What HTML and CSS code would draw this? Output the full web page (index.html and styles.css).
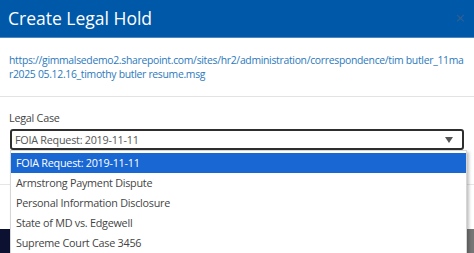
FILE: index.html
```html
<!DOCTYPE html>
<html lang="en">
<head>
    <meta charset="UTF-8">
    <meta name="viewport" content="width=device-width, initial-scale=1.0">
    <title>Create Legal Hold</title>
    <link rel="stylesheet" href="styles.css">
</head>
<body>

    <div class="modal">
        <!-- Header -->
        <div class="modal-header">
            <h2 class="modal-title">Create Legal Hold</h2>
            <span class="close">&times;</span>
        </div>

        <!-- Document location -->
        <div class="modal-section doc">
            <a class="doc-link" href="#">https://gimmalsedemo2.sharepoint.com/sites/hr2/administration/correspondence/tim butler_11mar2025 05.12.16_timothy butler resume.msg</a>
        </div>

        <!-- Legal case picker -->
        <div class="modal-section form">
            <label class="field-label" for="legalCase">Legal Case</label>
            <div class="select" id="legalCase">
                <span class="select-value">FOIA Request: 2019-11-11</span>
                <svg class="select-arrow" width="8" height="6" viewBox="0 0 8 6"><path d="M0 0 H8 L4 6 Z" fill="#555"/></svg>
            </div>
        </div>

        <div class="modal-footer"></div>
    </div>

    <!-- Page behind the dialog -->
    <div class="page-behind">
        <div class="page-nav"></div>
        <div class="page-content"></div>
    </div>

    <!-- Open dropdown list -->
    <ul class="dropdown">
        <li class="option selected">FOIA Request: 2019-11-11</li>
        <li class="option">Armstrong Payment Dispute</li>
        <li class="option">Personal Information Disclosure</li>
        <li class="option">State of MD vs. Edgewell</li>
        <li class="option">Supreme Court Case 3456</li>
    </ul>

</body>
</html>
```

FILE: styles.css
```css
body {
    font-family: 'Open Sans', 'Noto Sans', sans-serif;
    margin: 0;
    padding: 0;
    background-color: #ffffff;
    position: relative;
    height: 253px;
    overflow: hidden;
}

.modal {
    background: white;
    height: 229px;
    display: flex;
    flex-direction: column;
}

.modal-header {
    background-color: #0058a8;
    height: 37px;
    border-bottom: 1px solid #4d86c0;
    display: flex;
    align-items: center;
    justify-content: space-between;
    padding: 0 9px 0 8px;
}

.modal-title {
    margin: 0;
    color: #ffffff;
    font-size: 17.5px;
    font-weight: 400;
    line-height: 22px;
    padding-bottom: 2px;
}

.close {
    color: #2f5f93;
    font-size: 17px;
    line-height: 17px;
    padding-bottom: 2px;
}

.modal-section {
    padding: 0 9px;
}

.doc {
    padding-top: 15px;
    padding-bottom: 15px;
    border-bottom: 1px solid #e3e3e3;
}

.doc-link {
    display: block;
    color: #2c79bd;
    text-decoration: none;
    font-size: 10.4px;
    letter-spacing: -0.3px;
    line-height: 14px;
    word-break: break-all;
}

.form {
    padding-top: 13px;
    padding-bottom: 34px;
}

.field-label {
    display: block;
    color: #444444;
    font-size: 10.8px;
    letter-spacing: -0.25px;
    line-height: 16px;
    margin-bottom: 3px;
}

.select {
    height: 17px;
    margin-left: 1px;
    margin-right: 1px;
    border: 2px solid #2e2e2e;
    border-radius: 3px;
    display: flex;
    align-items: center;
    justify-content: space-between;
    padding: 0 9px 0 3px;
}

.select-value {
    color: #555555;
    font-size: 10.8px;
    letter-spacing: -0.25px;
}

.modal-footer {
    flex: 1;
    border-top: 1px solid #e6e6e6;
}

.page-behind {
    display: flex;
    height: 24px;
}

.page-nav {
    width: 12px;
    background-color: #0c1131;
}

.page-content {
    flex: 1;
    background-color: #767676;
}

.dropdown {
    position: absolute;
    top: 150px;
    left: 10px;
    width: 455px;
    margin: 0;
    padding: 2px 0 0 0;
    list-style: none;
    background: white;
    border: 1px solid #d6d6d6;
    box-shadow: 2px 2px 3px rgba(0, 0, 0, 0.25);
    height: 110px;
}

.option {
    height: 20px;
    line-height: 20px;
    padding-left: 5px;
    font-size: 10.8px;
    letter-spacing: -0.25px;
    color: #444444;
}

.option.selected {
    background-color: #1967d2;
    color: #ffffff;
}
```
